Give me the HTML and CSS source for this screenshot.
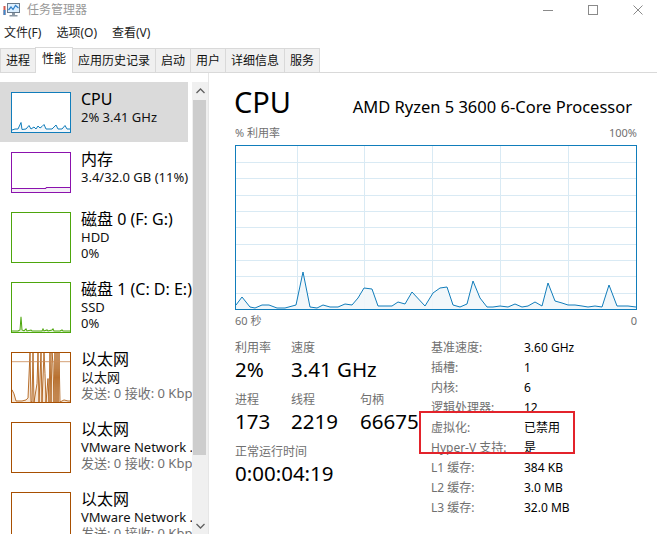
FILE: index.html
```html
<!DOCTYPE html>
<html lang="zh-CN">
<head>
<meta charset="utf-8">
<title>任务管理器</title>
<link rel="stylesheet" href="styles.css">
</head>
<body>
<div class="titlebar">
  <svg class="app-icon" viewBox="0 0 17 15" width="17" height="15">
    <rect x="0.5" y="4" width="2" height="9" fill="#d4584c"/>
    <rect x="0.5" y="8" width="2" height="5" fill="#3d8ccf"/>
    <rect x="4.5" y="1.5" width="12" height="9" fill="#dcefff" stroke="#6a7b8c"/>
    <polyline points="5.5,8 8,5 10,7.5 12.5,3.5 15.5,6" fill="none" stroke="#2f7fc8" stroke-width="1.2"/>
    <rect x="9" y="11" width="3" height="2" fill="#8b97a3"/>
    <rect x="6.5" y="13" width="8" height="1.5" fill="#8b97a3"/>
  </svg>
  <span class="title">任务管理器</span>
  <div class="controls">
    <svg width="10" height="10" viewBox="0 0 10 10"><line x1="0" y1="5.5" x2="10" y2="5.5" stroke="#8a8a8a" stroke-width="1"/></svg>
    <svg width="10" height="10" viewBox="0 0 10 10"><rect x="0.5" y="0.5" width="9" height="9" fill="none" stroke="#8a8a8a" stroke-width="1"/></svg>
    <svg width="10" height="10" viewBox="0 0 10 10"><path d="M0.5 0.5 L9.5 9.5 M9.5 0.5 L0.5 9.5" stroke="#8a8a8a" stroke-width="1"/></svg>
  </div>
</div>

<div class="menubar">
  <span>文件(F)</span>
  <span>选项(O)</span>
  <span>查看(V)</span>
</div>

<div class="tabs">
  <div class="tab">进程</div>
  <div class="tab active">性能</div>
  <div class="tab">应用历史记录</div>
  <div class="tab">启动</div>
  <div class="tab">用户</div>
  <div class="tab">详细信息</div>
  <div class="tab">服务</div>
</div>

<div class="main">
  <div class="sidebar">
    <div class="list">
      <div class="item sel">
        <svg class="mini cpu" viewBox="0 0 58 39" preserveAspectRatio="none">
          <polygon points="0,37 3,36 6,36 9,29.5 10,36.5 14,36 17,32.5 19,36 22,34 24,36 26,33 28,35 30,33.5 32,31.5 34,36 38,36 40,36 44,32 46,36 50,36 53,32.5 55,36 58,36 58,39 0,39" fill="#f1f6fa"/>
          <polyline points="0,37 3,36 6,36 9,29.5 10,36.5 14,36 17,32.5 19,36 22,34 24,36 26,33 28,35 30,33.5 32,31.5 34,36 38,36 40,36 44,32 46,36 50,36 53,32.5 55,36 58,36" fill="none" stroke="#117dbb" stroke-width="1"/>
        </svg>
        <div class="info">
          <div class="name">CPU</div>
          <div class="sub">2% 3.41 GHz</div>
        </div>
      </div>
      <div class="item">
        <svg class="mini mem" viewBox="0 0 58 39" preserveAspectRatio="none">
          <polygon points="0,35.5 34,35.5 34,34.5 58,34.5 58,39 0,39" fill="#f4eef6"/>
          <polyline points="0,35.5 34,35.5 34,34.5 58,34.5" fill="none" stroke="#8b12ae" stroke-width="1"/>
        </svg>
        <div class="info">
          <div class="name">内存</div>
          <div class="sub">3.4/32.0 GB (11%)</div>
        </div>
      </div>
      <div class="item tall">
        <svg class="mini disk" viewBox="0 0 58 48" preserveAspectRatio="none"></svg>
        <div class="info">
          <div class="name">磁盘 0 (F: G:)</div>
          <div class="sub">HDD</div>
          <div class="sub">0%</div>
        </div>
      </div>
      <div class="item tall">
        <svg class="mini disk" viewBox="0 0 58 48" preserveAspectRatio="none">
          <polygon points="0,47 6,47 8,46 9,33 10,46 12,47 14,45 15,47 19,46 20,47 30,47 31,45 32,47 35,46 36,47 40,46 41,45 42,47 48,47 50,46 51,47 58,47 58,48 0,48" fill="#edf6e7"/>
          <polyline points="0,47 6,47 8,46 9,33 10,46 12,47 14,45 15,47 19,46 20,47 30,47 31,45 32,47 35,46 36,47 40,46 41,45 42,47 48,47 50,46 51,47 58,47" fill="none" stroke="#4da60c" stroke-width="1"/>
        </svg>
        <div class="info">
          <div class="name">磁盘 1 (C: D: E:)</div>
          <div class="sub">SSD</div>
          <div class="sub">0%</div>
        </div>
      </div>
      <div class="item tall">
        <svg class="mini net" viewBox="0 0 58 48" preserveAspectRatio="none">
          <polygon points="0,36 2,40 4,47 10,47 14,46 16,44 18,0 19,48 20,48 21,0 22,48 25,30 26,0 27,48 29,0 30,48 32,0 33,20 34,48 36,25 37,48 38,0 39,48 40,0 41,10 42,48 43,0 44,48 45,0 46,48 47,0 48,48 52,46 56,47 58,47 58,48 0,48" fill="#f6e6d6"/>
          <polyline points="0,36 2,40 4,47 10,47 14,46 16,44 18,0 19,48 20,48 21,0 22,48 25,30 26,0 27,48 29,0 30,48 32,0 33,20 34,48 36,25 37,48 38,0 39,48 40,0 41,10 42,48 43,0 44,48 45,0 46,48 47,0 48,48 52,46 56,47 58,47" fill="none" stroke="#a74f01" stroke-width="0.8"/>
          <line x1="0" y1="8.5" x2="58" y2="8.5" stroke="#c98a55" stroke-width="0.8"/>
        </svg>
        <div class="info">
          <div class="name">以太网</div>
          <div class="sub">以太网</div>
          <div class="sub gray">发送: 0 接收: 0 Kbps</div>
        </div>
      </div>
      <div class="item tall">
        <svg class="mini net" viewBox="0 0 58 48" preserveAspectRatio="none"></svg>
        <div class="info">
          <div class="name">以太网</div>
          <div class="sub">VMware Network ...</div>
          <div class="sub gray">发送: 0 接收: 0 Kbps</div>
        </div>
      </div>
      <div class="item tall">
        <svg class="mini net" viewBox="0 0 58 48" preserveAspectRatio="none"></svg>
        <div class="info">
          <div class="name">以太网</div>
          <div class="sub">VMware Network ...</div>
          <div class="sub gray">发送: 0 接收: 0 Kbps</div>
        </div>
      </div>
    </div>
    <div class="scroll">
      <div class="arrow up">
        <svg width="9" height="6" viewBox="0 0 9 6"><polyline points="0.5,5 4.5,1 8.5,5" fill="none" stroke="#606060" stroke-width="1.3"/></svg>
      </div>
      <div class="thumb"></div>
      <div class="track"></div>
      <div class="arrow down">
        <svg width="9" height="6" viewBox="0 0 9 6"><polyline points="0.5,1 4.5,5 8.5,1" fill="none" stroke="#606060" stroke-width="1.3"/></svg>
      </div>
    </div>
  </div>

  <div class="detail">
    <div class="head">
      <div class="big">CPU</div>
      <div class="model">AMD Ryzen 5 3600 6-Core Processor</div>
    </div>
    <div class="axis">
      <span>% 利用率</span>
      <span>100%</span>
    </div>
    <div class="graph">
      <svg viewBox="0 0 400 163" preserveAspectRatio="none" width="400" height="163">
        <g stroke="#d9eaf4" stroke-width="1" shape-rendering="crispEdges">
          <line x1="61.5" y1="0" x2="61.5" y2="163"/>
          <line x1="128.5" y1="0" x2="128.5" y2="163"/>
          <line x1="196.5" y1="0" x2="196.5" y2="163"/>
          <line x1="264.5" y1="0" x2="264.5" y2="163"/>
          <line x1="332.5" y1="0" x2="332.5" y2="163"/>
          <line x1="0" y1="16.5" x2="400" y2="16.5"/>
          <line x1="0" y1="32.5" x2="400" y2="32.5"/>
          <line x1="0" y1="49.5" x2="400" y2="49.5"/>
          <line x1="0" y1="65.5" x2="400" y2="65.5"/>
          <line x1="0" y1="81.5" x2="400" y2="81.5"/>
          <line x1="0" y1="98.5" x2="400" y2="98.5"/>
          <line x1="0" y1="114.5" x2="400" y2="114.5"/>
          <line x1="0" y1="130.5" x2="400" y2="130.5"/>
          <line x1="0" y1="147.5" x2="400" y2="147.5"/>
        </g>
        <polygon fill="#f1f6fa" fill-opacity="0.9" points="0,159 6,151 14,161 19,162 26,159 33,159 41,162 49,162 60,159 67,126 74,161 81,162 87,159 94,161 102,161 109,158 116,159 122,152 128,142 136,143 142,160 156,160 162,156 169,158 176,146 189,160 197,147 204,142 211,141 217,159 224,161 231,158 237,135 244,152 251,161 257,161 264,160 272,161 279,158 286,161 292,160 299,156 306,160 312,137 319,155 326,157 332,159 339,159 346,160 352,161 359,160 366,161 373,139 381,160 392,160 400,161 400,163 0,163"/>
        <polyline fill="none" stroke="#117dbb" stroke-width="1" stroke-linejoin="round" points="0,159 6,151 14,161 19,162 26,159 33,159 41,162 49,162 60,159 67,126 74,161 81,162 87,159 94,161 102,161 109,158 116,159 122,152 128,142 136,143 142,160 156,160 162,156 169,158 176,146 189,160 197,147 204,142 211,141 217,159 224,161 231,158 237,135 244,152 251,161 257,161 264,160 272,161 279,158 286,161 292,160 299,156 306,160 312,137 319,155 326,157 332,159 339,159 346,160 352,161 359,160 366,161 373,139 381,160 392,160 400,161"/>
      </svg>
    </div>
    <div class="axis bottom">
      <span>60 秒</span>
      <span>0</span>
    </div>

    <div class="stats">
      <div class="left">
        <div class="grp">
          <div class="cell c1"><div class="lbl">利用率</div><div class="val">2%</div></div>
          <div class="cell c2"><div class="lbl">速度</div><div class="val">3.41 GHz</div></div>
        </div>
        <div class="grp">
          <div class="cell c1"><div class="lbl">进程</div><div class="val">173</div></div>
          <div class="cell c2"><div class="lbl">线程</div><div class="val">2219</div></div>
          <div class="cell c3"><div class="lbl">句柄</div><div class="val">66675</div></div>
        </div>
        <div class="grp">
          <div class="cell"><div class="lbl">正常运行时间</div><div class="val">0:00:04:19</div></div>
        </div>
      </div>
      <div class="right">
        <div class="row"><span class="k">基准速度:</span><span class="v">3.60 GHz</span></div>
        <div class="row"><span class="k">插槽:</span><span class="v">1</span></div>
        <div class="row"><span class="k">内核:</span><span class="v">6</span></div>
        <div class="row"><span class="k">逻辑处理器:</span><span class="v">12</span></div>
        <div class="row"><span class="k">虚拟化:</span><span class="v">已禁用</span></div>
        <div class="row"><span class="k">Hyper-V 支持:</span><span class="v">是</span></div>
        <div class="row"><span class="k">L1 缓存:</span><span class="v">384 KB</span></div>
        <div class="row"><span class="k">L2 缓存:</span><span class="v">3.0 MB</span></div>
        <div class="row"><span class="k">L3 缓存:</span><span class="v">32.0 MB</span></div>
      </div>
    </div>
  </div>
</div>

<div class="redbox"></div>
</body>
</html>
```

FILE: styles.css
```css
* {
  box-sizing: border-box;
  margin: 0;
  padding: 0;
}

html, body {
  width: 657px;
  height: 534px;
  overflow: hidden;
  background: #ffffff;
}

body {
  position: relative;
  font-family: "Noto Sans", "Noto Sans CJK SC", sans-serif;
  color: #000;
  font-size: 12px;
}

/* title bar */
.titlebar {
  height: 19px;
  display: flex;
  align-items: center;
}

.app-icon {
  margin-left: 3px;
  flex: none;
}

.title {
  margin-left: 7px;
  font-size: 12px;
  color: #999999;
  line-height: 18px;
}

.controls {
  margin-left: auto;
  margin-right: 14px;
  display: flex;
  gap: 35px;
}

/* menu */
.menubar {
  height: 24px;
  display: flex;
  align-items: center;
  gap: 15px;
  padding-left: 4px;
  font-size: 12px;
  line-height: 20px;
  color: #222;
  margin-top: 2px;
}

/* tabs */
.tabs {
  margin-top: 2px;
  height: 26px;
  display: flex;
  align-items: flex-end;
  border-bottom: 1px solid #d9d9d9;
}

.tab {
  height: 24px;
  padding: 0 5px;
  border: 1px solid #d9d9d9;
  border-bottom: none;
  background: #f0f0f0;
  margin-right: -1px;
  font-size: 12px;
  line-height: 24px;
  color: #111;
  white-space: nowrap;
}

.tab.active {
  height: 26px;
  margin-bottom: -1px;
  padding: 0 6px;
  background: #ffffff;
  line-height: 22px;
  position: relative;
  z-index: 1;
}

/* main */
.main {
  display: flex;
  height: 461px;
}

.sidebar {
  width: 209px;
  flex: none;
  display: flex;
  border-right: 1px solid #e6e6e6;
}

.list {
  width: 192px;
  padding-top: 9px;
  overflow: hidden;
}

.item {
  width: 188px;
  height: 60px;
  display: flex;
  align-items: flex-start;
  padding: 10px 0 0 11px;
}

.item.tall {
  height: 70px;
}

.item.sel {
  background: #dadada;
}

.mini {
  width: 60px;
  height: 41px;
  flex: none;
  border: 1px solid;
  background: #fff;
}

.tall .mini {
  height: 51px;
}

.mini.cpu { border-color: #117dbb; }
.mini.mem { border-color: #8b12ae; }
.mini.disk { border-color: #4da60c; }
.mini.net { border-color: #a74f01; }

.info {
  margin-left: 10px;
  margin-top: -3px;
  white-space: nowrap;
}

.name {
  font-size: 16px;
  line-height: 20px;
  color: #000;
}

.sub {
  font-size: 13px;
  line-height: 16px;
  color: #111;
}

.sub.gray {
  color: #707070;
}

/* scrollbar */
.scroll {
  width: 16px;
  margin-top: 9px;
  background: #f0f0f0;
  display: flex;
  flex-direction: column;
}

.arrow {
  height: 18px;
  display: flex;
  align-items: center;
  justify-content: center;
  flex: none;
}

.arrow.down {
  height: 17px;
}

.thumb {
  height: 355px;
  margin: 0 2px 0 1px;
  background: #cdcdcd;
  flex: none;
}

.track {
  flex: 1;
}

/* detail panel */
.detail {
  flex: 1;
  padding: 11px 20px 0 25px;
}

.head {
  display: flex;
  align-items: baseline;
  justify-content: space-between;
  height: 36px;
  line-height: 36px;
}

.big {
  font-size: 29px;
  color: #000;
}

.model {
  font-size: 16.5px;
  padding-right: 5px;
  color: #000;
}

.axis {
  margin-top: 5px;
  display: flex;
  justify-content: space-between;
  font-size: 11px;
  line-height: 16px;
  color: #707070;
  padding-left: 1px;
}

.axis.bottom {
  margin-top: 3px;
}

.graph {
  margin-top: 4px;
  margin-left: 1px;
  width: 402px;
  height: 165px;
  border: 1px solid #117dbb;
}

.graph svg {
  display: block;
}

/* stats */
.stats {
  display: flex;
  margin-top: 9px;
  padding-left: 1px;
}

.left {
  width: 196px;
  flex: none;
  padding-top: 2px;
}

.grp {
  display: flex;
  height: 52px;
}

.cell {
  white-space: nowrap;
}

.c1 { width: 56px; }
.c2 { width: 69px; }

.lbl {
  font-size: 12px;
  line-height: 16px;
  color: #707070;
}

.val {
  font-size: 20.5px;
  line-height: 26px;
  color: #000;
}

.right {
  font-size: 12px;
}

.row {
  display: flex;
  height: 20px;
  line-height: 20px;
}

.k {
  width: 93px;
  color: #707070;
  white-space: nowrap;
}

.v {
  color: #000;
}

/* annotation overlay */
.redbox {
  position: absolute;
  left: 419px;
  top: 411px;
  width: 156px;
  height: 43px;
  border: 2px solid #e3232b;
}
```
